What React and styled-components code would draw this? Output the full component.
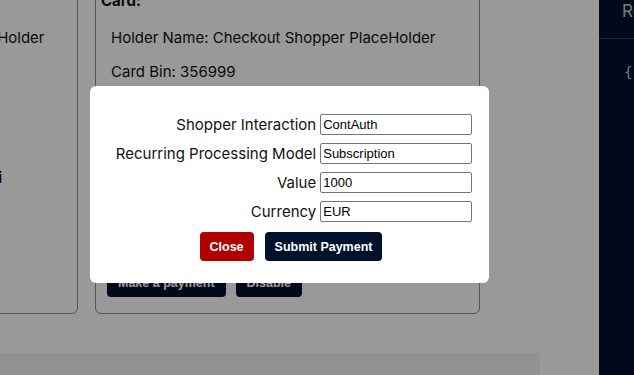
import React from 'react';
import styled, { createGlobalStyle } from 'styled-components';

const GlobalStyle = createGlobalStyle`
  html, body {
    margin: 0;
    padding: 0;
    height: 100%;
    overflow: hidden;
  }
  body {
    background: #ffffff;
    font-family: Inter, "Noto Sans", sans-serif;
    color: #111111;
  }
`;

const Page = styled.div`
  display: flex;
  height: 375px;
  overflow: hidden;
`;

const Main = styled.main`
  flex: 1;
  display: flex;
  flex-direction: column;
  justify-content: space-between;
  overflow: hidden;
`;

const CardRow = styled.div`
  display: flex;
  gap: 17px;
  margin-top: -48px;
  margin-left: -296px;
`;

const Card = styled.section`
  width: ${(p) => p.$width}px;
  flex-shrink: 0;
  height: 362px;
  box-sizing: border-box;
  border: 1px solid #8c8c8c;
  border-radius: 6px;
  padding: 38px 5px 0;
  display: flex;
  flex-direction: column;
`;

const CardTitle = styled.h4`
  margin: 0 0 10px;
  font-size: 15px;
  font-weight: 700;
  line-height: 20px;
`;

const Line = styled.p`
  margin: 0;
  padding-left: 10px;
  font-size: 15px;
  line-height: 34px;
  white-space: nowrap;
`;

const EndLine = styled.p`
  margin: 38px 0 0;
  padding-right: 70px;
  text-align: right;
  font-size: 15px;
  line-height: 34px;
  font-weight: 700;
  white-space: nowrap;
  direction: rtl;
`;

const Actions = styled.div`
  margin-top: auto;
  margin-bottom: 16px;
  display: flex;
  gap: 10px;
  padding-left: 6px;
`;

const SmallButton = styled.button`
  border: none;
  border-radius: 4px;
  background: #00112c;
  color: #ffffff;
  font-family: "Liberation Sans", Arial, sans-serif;
  font-size: 12.5px;
  font-weight: 700;
  height: 29px;
  padding: 0 11px;
`;

const Footer = styled.div`
  height: 22px;
  width: 540px;
  background: #f3f4f5;
`;

const Sidebar = styled.aside`
  width: 35px;
  flex-shrink: 0;
  background: #00112c;
  color: #c9ccd2;
  overflow: hidden;
`;

const SideHead = styled.div`
  height: 39px;
  box-sizing: border-box;
  border-bottom: 1px solid #3a4558;
  padding: 1px 0 0 23px;
  font-size: 17px;
  line-height: 20px;
  white-space: nowrap;
`;

const Code = styled.pre`
  margin: 0;
  padding: 24px 0 0 25px;
  font-family: "DejaVu Sans Mono", monospace;
  font-size: 14px;
  line-height: 18px;
`;

const Overlay = styled.div`
  position: fixed;
  inset: 0;
  background: rgba(0, 0, 0, 0.4);
  display: flex;
  align-items: flex-start;
  padding-top: 86px;
  padding-left: 90px;
`;

const Modal = styled.div`
  width: 399px;
  box-sizing: border-box;
  background: #ffffff;
  border-radius: 6px;
  padding: 28px 0 22px;
  display: flex;
  flex-direction: column;
  align-items: center;
`;

const Form = styled.div`
  display: grid;
  grid-template-columns: auto 152px;
  column-gap: 4px;
  row-gap: 8px;
  align-items: center;
  margin-left: 9px;
`;

const Label = styled.label`
  text-align: right;
  font-size: 15px;
  line-height: 21px;
  color: #111111;
`;

const Input = styled.input`
  box-sizing: border-box;
  height: 21px;
  width: 152px;
  border: 1px solid #767676;
  border-radius: 2px;
  padding: 0 2px;
  font-family: "Liberation Sans", Arial, sans-serif;
  font-size: 13px;
  color: #000000;
`;

const Buttons = styled.div`
  display: flex;
  gap: 11px;
  margin-top: 10px;
  margin-left: 3px;
`;

const ModalButton = styled.button`
  border: none;
  border-radius: 4px;
  background: ${(p) => (p.$danger ? '#b00000' : '#00112c')};
  color: #ffffff;
  font-family: "Liberation Sans", Arial, sans-serif;
  font-size: 12.5px;
  font-weight: 700;
  height: 29px;
  padding: 0 10px;
`;

const fields = [
  { label: 'Shopper Interaction', value: 'ContAuth' },
  { label: 'Recurring Processing Model', value: 'Subscription' },
  { label: 'Value', value: '1000' },
  { label: 'Currency', value: 'EUR' },
];

export default function App() {
  return (
    <>
      <GlobalStyle />
      <Page>
        <Main>
          <CardRow>
            <Card $width={374}>
              <CardTitle>Card:</CardTitle>
              <Line>Holder Name: Checkout Shopper PlaceHolder</Line>
              <Line>Card Bin: 411111</Line>
              <Line>Last Four: 1111</Line>
              <EndLine>Shopper: Demo Shopper Ami</EndLine>
            </Card>
            <Card $width={385}>
              <CardTitle>Card:</CardTitle>
              <Line>Holder Name: Checkout Shopper PlaceHolder</Line>
              <Line>Card Bin: 356999</Line>
              <Line>Last Four: 0002</Line>
              <Actions>
                <SmallButton>Make a payment</SmallButton>
                <SmallButton>Disable</SmallButton>
              </Actions>
            </Card>
          </CardRow>
          <Footer />
        </Main>
        <Sidebar>
          <SideHead>Response</SideHead>
          <Code>{'{'}</Code>
        </Sidebar>
      </Page>
      <Overlay>
        <Modal>
          <Form>
            {fields.map((f) => (
              <React.Fragment key={f.label}>
                <Label>{f.label}</Label>
                <Input defaultValue={f.value} />
              </React.Fragment>
            ))}
          </Form>
          <Buttons>
            <ModalButton $danger>Close</ModalButton>
            <ModalButton>Submit Payment</ModalButton>
          </Buttons>
        </Modal>
      </Overlay>
    </>
  );
}
